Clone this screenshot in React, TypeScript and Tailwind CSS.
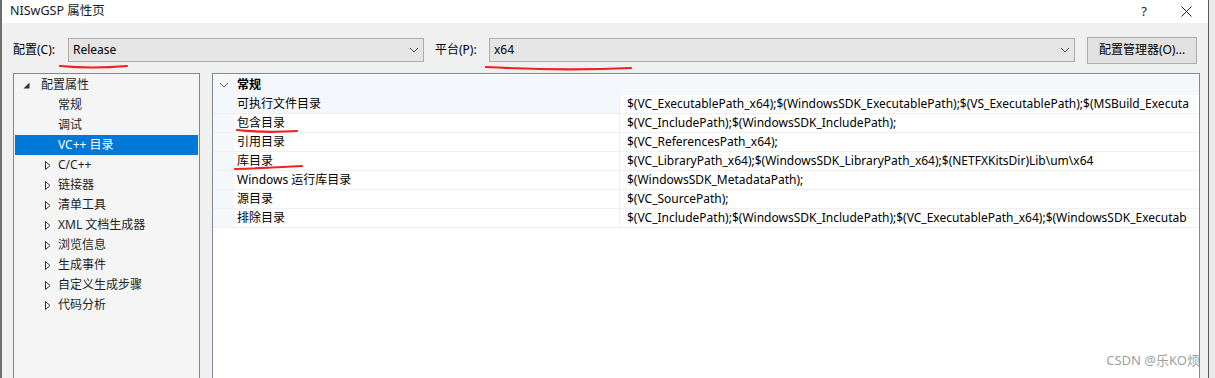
import React from 'react'

const font = { fontFamily: '"Noto Sans", "Noto Sans CJK SC", sans-serif' }

const treeItems: { label: string; level: 0 | 1; expander?: 'open' | 'closed'; selected?: boolean }[] = [
  { label: '配置属性', level: 0, expander: 'open' },
  { label: '常规', level: 1 },
  { label: '调试', level: 1 },
  { label: 'VC++ 目录', level: 1, selected: true },
  { label: 'C/C++', level: 1, expander: 'closed' },
  { label: '链接器', level: 1, expander: 'closed' },
  { label: '清单工具', level: 1, expander: 'closed' },
  { label: 'XML 文档生成器', level: 1, expander: 'closed' },
  { label: '浏览信息', level: 1, expander: 'closed' },
  { label: '生成事件', level: 1, expander: 'closed' },
  { label: '自定义生成步骤', level: 1, expander: 'closed' },
  { label: '代码分析', level: 1, expander: 'closed' },
]

// values are cut where the grid clips them in the screenshot
const props = [
  ['可执行文件目录', '$(VC_ExecutablePath_x64);$(WindowsSDK_ExecutablePath);$(VS_ExecutablePath);$(MSBuild_Executa'],
  ['包含目录', '$(VC_IncludePath);$(WindowsSDK_IncludePath);'],
  ['引用目录', '$(VC_ReferencesPath_x64);'],
  ['库目录', '$(VC_LibraryPath_x64);$(WindowsSDK_LibraryPath_x64);$(NETFXKitsDir)Lib\\um\\x64'],
  ['Windows 运行库目录', '$(WindowsSDK_MetadataPath);'],
  ['源目录', '$(VC_SourcePath);'],
  ['排除目录', '$(VC_IncludePath);$(WindowsSDK_IncludePath);$(VC_ExecutablePath_x64);$(WindowsSDK_Executab'],
]

function Chevron() {
  return (
    <svg width="10" height="6" viewBox="0 0 10 6" className="shrink-0">
      <path d="M1 1 L5 5 L9 1" fill="none" stroke="#555" strokeWidth="1" />
    </svg>
  )
}

function Combo({ value, width }: { value: string; width: string }) {
  return (
    <div className={`${width} h-[24px] border border-[#adadad] bg-[#e5e5e5] flex items-center pl-[4px] pr-[4px] text-[12px] text-black`}>
      <span className="flex-1">{value}</span>
      <Chevron />
    </div>
  )
}

export default function App() {
  return (
    <div className="w-[1215px] h-[378px] overflow-hidden flex bg-white text-[12px] text-black" style={font}>
      {/* what lies behind the dialog */}
      <div className="w-[2px] bg-[#6d6d6d]" />

      <div className="w-[1207px] flex flex-col border-r border-[#5c5c5c] relative">
        {/* title bar */}
        <div className="h-[23px] bg-white flex items-center pl-[8px] pr-[16px] shrink-0">
          <span className="flex-1 text-[12.5px] text-[#1a1a1a]">NISwGSP 属性页</span>
          <span className="text-[13px] mr-[34px] text-[#222]">?</span>
          <svg width="11" height="11" viewBox="0 0 11 11">
            <path d="M0.5 0.5 L10.5 10.5 M10.5 0.5 L0.5 10.5" stroke="#222" strokeWidth="1" />
          </svg>
        </div>

        {/* toolbar */}
        <div className="h-[50px] bg-[#f0f0f0] flex items-center pl-[11px] pt-[4px] shrink-0">
          <span className="w-[55px]">配置(C):</span>
          <Combo value="Release" width="w-[356px]" />
          <span className="ml-[11px] w-[54px]">平台(P):</span>
          <Combo value="x64" width="w-[586px]" />
          <div className="ml-[12px] w-[110px] h-[27px] border border-[#adadad] bg-[#e1e1e1] flex items-center justify-center">
            配置管理器(O)...
          </div>
        </div>

        {/* content */}
        <div className="flex-1 bg-[#f0f0f0] flex pl-[11px] gap-[12px]">
          <div className="w-[187px] h-[320px] border border-[#828790] bg-[#f5f5f5] pt-[1px] px-[1px]">
            {treeItems.map((it) => (
              <div
                key={it.label}
                className={`h-[20px] flex items-center ${it.selected ? 'bg-[#0078d7] text-white' : 'text-[#1e1e1e]'}`}
              >
                <div className={`${it.level === 0 ? 'ml-[8px]' : 'ml-[30px]'} w-[11px] flex items-center`}>
                  {it.expander === 'open' && (
                    <svg width="7" height="7" viewBox="0 0 7 7">
                      <path d="M6.5 0.5 L6.5 6.5 L0.5 6.5 Z" fill="#333" />
                    </svg>
                  )}
                  {it.expander === 'closed' && (
                    <svg width="6" height="9" viewBox="0 0 6 9">
                      <path d="M0.5 0.5 L5 4.5 L0.5 8.5 Z" fill="none" stroke="#333" strokeWidth="1" />
                    </svg>
                  )}
                </div>
                <span className={it.level === 0 ? 'ml-[7px]' : 'ml-[2px]'}>{it.label}</span>
              </div>
            ))}
          </div>

          <div className="w-[988px] h-[320px] border-l border-t border-r border-[#828790] bg-white pt-[1px]">
            <div className="h-[20px] bg-[#f4f7fc] flex items-center">
              <div className="w-[21px] flex justify-center">
                <Chevron />
              </div>
              <span className="font-bold pl-[3px]">常规</span>
            </div>
            {props.map(([name, value], i) => (
              <div key={name} className="h-[19px] flex border-b border-[#f0f0f0]">
                <div className="w-[21px] bg-[#f4f7fc]" />
                <div className={`w-[386px] flex items-center pl-[3px] border-r border-[#f0f0f0] ${i === 0 ? 'bg-[#f4f7fc]' : ''}`}>
                  {name}
                </div>
                <div className="flex-1 flex items-center pl-[7px] overflow-hidden whitespace-nowrap">{value}</div>
              </div>
            ))}
          </div>
        </div>

        {/* red hand-drawn annotations */}
        <svg className="absolute left-0 top-0 pointer-events-none" width="1207" height="378">
          <path d="M58 66 Q90 69 125 66" stroke="#ee2222" strokeWidth="2.2" fill="none" strokeLinecap="round" />
          <path d="M484 67 Q560 71 629 68" stroke="#ee2222" strokeWidth="2.2" fill="none" strokeLinecap="round" />
          <path d="M235 130 Q262 133 295 131" stroke="#ee2222" strokeWidth="2.2" fill="none" strokeLinecap="round" />
          <path d="M233 169 Q265 168 300 166" stroke="#ee2222" strokeWidth="2.2" fill="none" strokeLinecap="round" />
        </svg>

        <span className="absolute right-[8px] bottom-[8px] text-[13px] text-[#a0a0a0]">CSDN @乐KO烦</span>
      </div>

      <div className="flex-1 bg-[#e9e9e9]" />
    </div>
  )
}
